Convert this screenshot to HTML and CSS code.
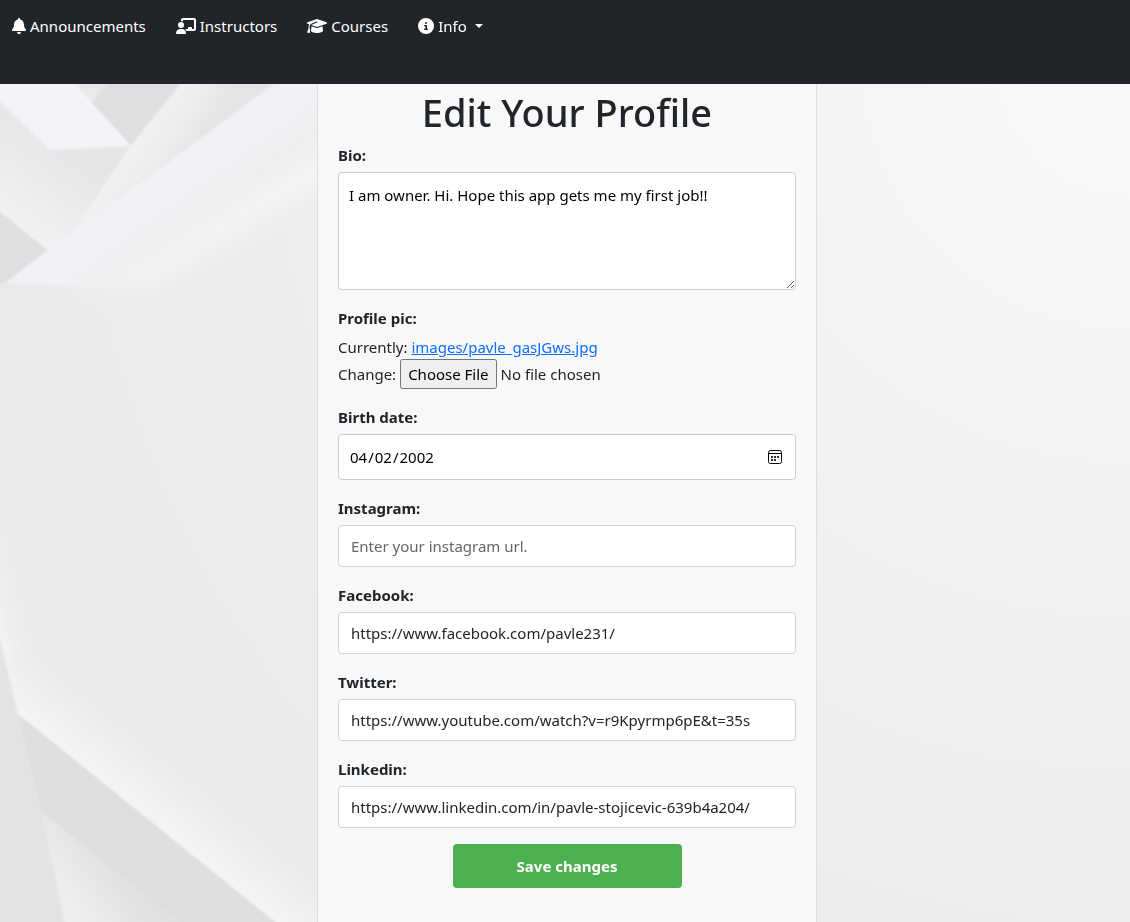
FILE: index.html
```html
<!DOCTYPE html>
<html lang="en">
<head>
<meta charset="utf-8">
<meta name="viewport" content="width=device-width, initial-scale=1">
<title>Edit Your Profile</title>
<link rel="stylesheet" href="styles.css">
</head>
<body>
<svg class="backdrop" viewBox="0 0 1130 922" preserveAspectRatio="xMinYMin slice" aria-hidden="true">
  <defs>
    <radialGradient id="base" gradientUnits="userSpaceOnUse" cx="1130" cy="60" r="1150">
      <stop offset="0" stop-color="#f9f9f9"/>
      <stop offset="0.35" stop-color="#f3f3f3"/>
      <stop offset="0.75" stop-color="#ededed"/>
      <stop offset="1" stop-color="#eaeaea"/>
    </radialGradient>
    <linearGradient id="fold" gradientUnits="userSpaceOnUse" x1="20" y1="225" x2="75" y2="150">
      <stop offset="0" stop-color="#f2f2f2"/>
      <stop offset="0.6" stop-color="#e9e9e9"/>
      <stop offset="1" stop-color="#e5e5e5"/>
    </linearGradient>
    <linearGradient id="fan" gradientUnits="userSpaceOnUse" x1="150" y1="110" x2="196" y2="142">
      <stop offset="0" stop-color="#f2f2f2"/>
      <stop offset="0.5" stop-color="#eeeeee"/>
      <stop offset="1" stop-color="#e5e5e5"/>
    </linearGradient>
    <linearGradient id="band" gradientUnits="userSpaceOnUse" x1="132" y1="230" x2="156" y2="263">
      <stop offset="0" stop-color="#f1f1f6"/>
      <stop offset="1" stop-color="#f2f2f3" stop-opacity="0"/>
    </linearGradient>
    <linearGradient id="ridge" gradientUnits="userSpaceOnUse" x1="146" y1="818" x2="188" y2="766">
      <stop offset="0" stop-color="#f5f5f6"/>
      <stop offset="0.5" stop-color="#efefef"/>
      <stop offset="1" stop-color="#eaeaea" stop-opacity="0"/>
    </linearGradient>
    <linearGradient id="side" gradientUnits="userSpaceOnUse" x1="4" y1="660" x2="44" y2="650">
      <stop offset="0" stop-color="#f4f4f5"/>
      <stop offset="1" stop-color="#eaeaea" stop-opacity="0"/>
    </linearGradient>
    <linearGradient id="inner" gradientUnits="userSpaceOnUse" x1="58" y1="900" x2="110" y2="862">
      <stop offset="0" stop-color="#efefef"/>
      <stop offset="1" stop-color="#e1e1e2"/>
    </linearGradient>
    <filter id="soft" x="-10%" y="-10%" width="120%" height="120%"><feGaussianBlur stdDeviation="1"/></filter>
    <filter id="glow" x="-20%" y="-20%" width="140%" height="140%"><feGaussianBlur stdDeviation="7"/></filter>
    <filter id="haze" x="-20%" y="-20%" width="140%" height="140%"><feGaussianBlur stdDeviation="12"/></filter>
  </defs>
  <rect width="1130" height="922" fill="url(#base)"/>
  <path d="M70 284L140 262L340 140V170L150 284Z" fill="#f6f6f6" filter="url(#haze)"/>
  <g filter="url(#glow)">
    <path d="M-20 480V640L18 730L60 700L50 560L10 440Z" fill="url(#side)"/>
    <path d="M0 700L18 730L290 950L360 950V860L70 650L30 640Z" fill="url(#ridge)"/>
  </g>
  <g filter="url(#soft)">
    <path d="M-9 60H300L48 252L-9 205Z" fill="url(#fold)"/>
    <path d="M200 60H305L70 236L131 145Z" fill="url(#fan)"/>
    <path d="M60 60H126L92 103Z" fill="#e9e9e9"/>
    <path d="M5 283L48 250L280 80H330V138L150 262L105 288Z" fill="url(#band)"/>
    <path d="M-9 60H54L131 146L50 150L-9 93Z" fill="#f4f4f8"/>
    <path d="M112 78H185L131 145L92 103Z" fill="#dfdfe1"/>
    <path d="M-9 204L47 250L5 283L-9 286Z" fill="#dfdfe1"/>
    <path d="M-9 620L0 640L18 714L42 812L66 934H-9Z" fill="#e3e3e5"/>
    <path d="M18 714L290 934H190L42 812Z" fill="#dedee0"/>
    <path d="M41 811L195 934H68Z" fill="url(#inner)"/>
  </g>
</svg>

<nav class="navbar" aria-label="Main">
  <a class="nav-link" href="#announcements">
    <svg class="icon" viewBox="0 0 448 512" aria-hidden="true"><path d="M224 0c-17.7 0-32 14.3-32 32V51.2C119 66 64 130.6 64 208v18.8c0 47-17.3 92.4-48.5 127.6l-7.4 8.3c-8.4 9.4-10.4 22.9-5.3 34.4S19.4 416 32 416H416c12.6 0 24-7.4 29.2-18.9s3.1-25-5.3-34.4l-7.4-8.3C401.3 319.2 384 273.9 384 226.8V208c0-77.4-55-142-128-156.8V32c0-17.7-14.3-32-32-32zm45.3 493.3c12-12 18.7-28.3 18.7-45.3H224 160c0 17 6.7 33.3 18.7 45.3s28.3 18.7 45.3 18.7s33.3-6.7 45.3-18.7z"/></svg>
    <span>Announcements</span>
  </a>
  <a class="nav-link" href="#instructors">
    <svg class="icon" viewBox="0 0 640 512" aria-hidden="true"><path d="M160 64c0-35.3 28.7-64 64-64H576c35.3 0 64 28.7 64 64V352c0 35.3-28.7 64-64 64H336.8c-11.8-25.5-29.9-47.5-52.4-64H384V320c0-17.7 14.3-32 32-32h64c17.7 0 32 14.3 32 32v32h64V64L224 64v49.1C205.2 102.2 183.3 96 160 96V64zm0 64a96 96 0 1 1 0 192 96 96 0 1 1 0-192zM133.3 352h53.3C260.3 352 320 411.7 320 485.3c0 14.7-11.9 26.7-26.7 26.7H26.7C11.9 512 0 500.1 0 485.3C0 411.7 59.7 352 133.3 352z"/></svg>
    <span>Instructors</span>
  </a>
  <a class="nav-link" href="#courses">
    <svg class="icon" viewBox="0 0 640 512" aria-hidden="true"><path d="M320 32c-8.1 0-16.1 1.4-23.7 4.1L15.8 137.4C6.3 140.9 0 149.9 0 160s6.3 19.1 15.8 22.6l57.9 20.9C57.3 229.3 48 259.8 48 291.9v28.1c0 28.4-10.8 57.7-22.3 80.8c-6.5 13-13.9 25.8-22.5 37.6C0 442.7-.9 448.3 .9 453.4s6 8.9 11.2 10.2l64 16c4.2 1.1 8.7 .3 12.4-2s6.3-6.1 7.1-10.4c8.6-42.8 4.3-81.2-2.1-108.7C90.3 344.3 86 329.8 80 316.5V291.9c0-30.2 10.2-58.7 27.9-81.5c12.9-15.5 29.6-28 49.2-35.7l157-61.7c8.2-3.2 17.5 .8 20.7 9s-.8 17.5-9 20.7l-157 61.7c-12.4 4.9-23.3 12.4-32.2 21.6l159.6 57.6c7.6 2.7 15.6 4.1 23.7 4.1s16.1-1.4 23.7-4.1L624.2 182.6c9.5-3.4 15.8-12.5 15.8-22.6s-6.3-19.1-15.8-22.6L343.7 36.1C336.1 33.4 328.1 32 320 32zM128 408c0 35.3 86 72 192 72s192-36.7 192-72L496.7 262.6 354.5 314c-11.1 4-22.8 6-34.5 6s-23.5-2-34.5-6L143.3 262.6 128 408z"/></svg>
    <span>Courses</span>
  </a>
  <button class="nav-link" type="button" aria-haspopup="true" aria-expanded="false">
    <svg class="icon" viewBox="0 0 512 512" aria-hidden="true"><path d="M256 512A256 256 0 1 0 256 0a256 256 0 1 0 0 512zM216 336h24V272H216c-13.3 0-24-10.7-24-24s10.7-24 24-24h48c13.3 0 24 10.7 24 24v88h8c13.3 0 24 10.7 24 24s-10.7 24-24 24H216c-13.3 0-24-10.7-24-24s10.7-24 24-24zm40-208a32 32 0 1 1 0 64 32 32 0 1 1 0-64z"/></svg>
    <span>Info</span>
    <span class="caret"></span>
  </button>
</nav>

<main class="page">
  <form class="card">
    <h1 class="title">Edit Your Profile</h1>
    <div class="field">
      <label class="label" for="bio">Bio:</label>
      <textarea class="control control-plain" id="bio" rows="4" spellcheck="false">I am owner. Hi. Hope this app gets me my first job!!</textarea>
    </div>
    <div class="field">
      <label class="label" for="pic">Profile pic:</label>
      <div class="line">Currently: <a class="link" href="#pavle">images/pavle_gasJGws.jpg</a></div>
      <div class="line upload"><span>Change:</span><input class="file" type="file" id="pic"></div>
    </div>
    <div class="field">
      <label class="label" for="birth">Birth date:</label>
      <div class="date">
        <input class="control control-plain" type="date" id="birth" value="2002-04-02">
        <svg class="calendar" viewBox="0 0 14 14" aria-hidden="true">
          <rect class="calendar-frame" x="0.5" y="0.5" width="13" height="13" rx="2"/>
          <path class="calendar-frame" d="M1 3.5H13"/>
          <path d="M3 6h2v2H3zM6 6h2v2H6zM9 6h2v2H9zM3 9h2v2H3zM6 9h2v2H6z"/>
        </svg>
      </div>
    </div>
    <div class="field">
      <label class="label" for="instagram">Instagram:</label>
      <input class="control" type="url" id="instagram" placeholder="Enter your instagram url.">
    </div>
    <div class="field">
      <label class="label" for="facebook">Facebook:</label>
      <input class="control" type="url" id="facebook" value="https://www.facebook.com/pavle231/">
    </div>
    <div class="field">
      <label class="label" for="twitter">Twitter:</label>
      <input class="control" type="url" id="twitter" value="https://www.youtube.com/watch?v=r9Kpyrmp6pE&amp;t=35s">
    </div>
    <div class="field">
      <label class="label" for="linkedin">Linkedin:</label>
      <input class="control" type="url" id="linkedin" value="https://www.linkedin.com/in/pavle-stojicevic-639b4a204/">
    </div>
    <button class="save" type="submit">Save changes</button>
  </form>
</main>
</body>
</html>
```
FILE: styles.css
```css
*,
*::before,
*::after {
  box-sizing: border-box;
}

body {
  display: flex;
  flex-direction: column;
  min-height: 100vh;
  margin: 0;
  background: #ececec;
  color: #212529;
  font-family: "Segoe UI", "Noto Sans", "Open Sans", sans-serif;
  font-size: 15px;
  line-height: 24px;
}

.backdrop {
  position: fixed;
  inset: 0;
  z-index: -1;
  width: 100%;
  height: 100%;
}

.navbar {
  display: flex;
  align-items: flex-start;
  gap: 30px;
  min-height: 84px;
  padding: 14px 12px;
  background: #212529;
}

.nav-link {
  display: flex;
  align-items: center;
  gap: 4px;
  padding: 0;
  border: 0;
  background: none;
  color: #fff;
  font: inherit;
  text-decoration: none;
  cursor: pointer;
}

.icon {
  height: 16px;
  fill: currentColor;
}

.caret {
  margin-left: 4px;
  border: 4px solid transparent;
  border-top-color: currentColor;
  border-bottom: 0;
}

.page {
  display: flex;
  flex: 1;
  justify-content: center;
  padding-left: 4px;
}

.card {
  width: 100%;
  max-width: 500px;
  padding: 4px 20px 20px;
  border: 1px solid #ddd;
  border-width: 0 1px;
  background: #f8f8f8;
}

.title {
  margin: 0 0 7px;
  font-size: 38px;
  font-weight: 500;
  line-height: 48px;
  text-align: center;
}

.field {
  margin-bottom: 16px;
}

.label {
  display: block;
  margin-bottom: 5px;
  font-weight: 700;
}

.control {
  display: block;
  width: 100%;
  padding: 8px 12px;
  border: 1px solid #ced4da;
  border-radius: 4px;
  background: #fff;
  color: #212529;
  font: inherit;
}

input.control {
  height: 42px;
}

.control::placeholder {
  color: #63676b;
  opacity: 1;
}

.control-plain {
  padding: 10px;
  border-color: #ccc;
  color: #000;
}

input.control-plain {
  height: 46px;
}

textarea.control {
  resize: vertical;
}

.date {
  position: relative;
}

.date .control::-webkit-calendar-picker-indicator {
  opacity: 0;
}

.calendar {
  position: absolute;
  top: 16px;
  right: 14px;
  width: 14px;
  height: 14px;
  fill: #333;
  pointer-events: none;
}

.calendar-frame {
  fill: none;
  stroke: #000;
}

.upload {
  display: flex;
  align-items: center;
  gap: 4px;
}

.link {
  color: #0d6efd;
}

.file {
  flex: 1;
  min-width: 0;
  font: inherit;
}

.file::file-selector-button {
  height: 30px;
  font: inherit;
}

.save {
  display: block;
  width: 50%;
  height: 44px;
  margin: 0 auto;
  border: 0;
  border-radius: 4px;
  background: #4caf50;
  color: #fff;
  font: inherit;
  font-weight: 700;
  cursor: pointer;
}
```
